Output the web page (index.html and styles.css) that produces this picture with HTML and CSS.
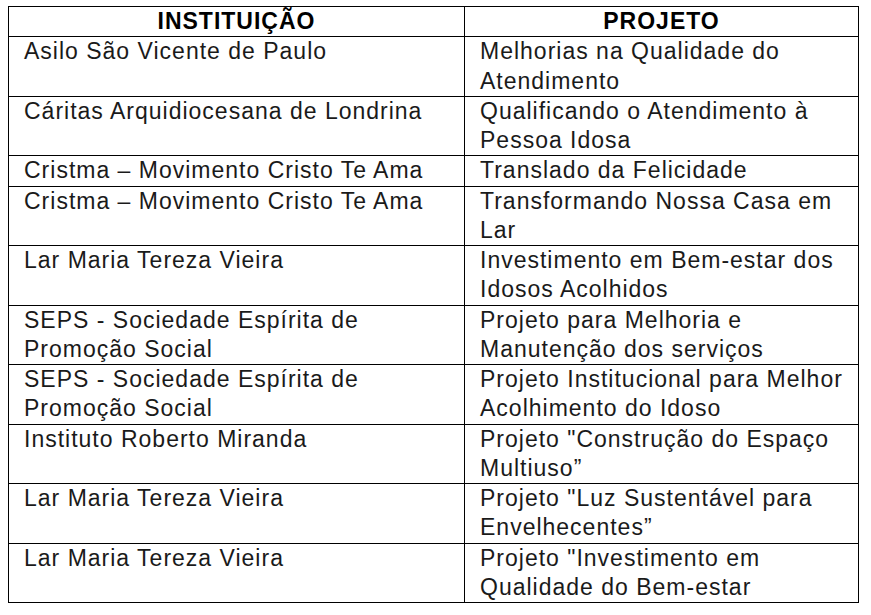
FILE: index.html
```html
<!DOCTYPE html>
<html lang="pt">
<head>
<meta charset="utf-8">
<title>Instituições e Projetos</title>
<link rel="stylesheet" href="styles.css">
</head>
<body>
<table class="grid">
  <colgroup><col class="c-inst"><col class="c-proj"></colgroup>
  <thead>
    <tr><th>INSTITUIÇÃO</th><th>PROJETO</th></tr>
  </thead>
  <tbody>
    <tr><td>Asilo São Vicente de Paulo</td><td>Melhorias na Qualidade do<br>Atendimento</td></tr>
    <tr><td>Cáritas Arquidiocesana de Londrina</td><td>Qualificando o Atendimento à<br>Pessoa Idosa</td></tr>
    <tr><td>Cristma – Movimento Cristo Te Ama</td><td>Translado da Felicidade</td></tr>
    <tr><td>Cristma – Movimento Cristo Te Ama</td><td>Transformando Nossa Casa em<br>Lar</td></tr>
    <tr><td>Lar Maria Tereza Vieira</td><td>Investimento em Bem-estar dos<br>Idosos Acolhidos</td></tr>
    <tr><td>SEPS - Sociedade Espírita de<br>Promoção Social</td><td>Projeto para Melhoria e<br>Manutenção dos serviços</td></tr>
    <tr><td>SEPS - Sociedade Espírita de<br>Promoção Social</td><td>Projeto Institucional para Melhor<br>Acolhimento do Idoso</td></tr>
    <tr><td>Instituto Roberto Miranda</td><td>Projeto "Construção do Espaço<br>Multiuso”</td></tr>
    <tr><td>Lar Maria Tereza Vieira</td><td>Projeto "Luz Sustentável para<br>Envelhecentes”</td></tr>
    <tr><td>Lar Maria Tereza Vieira</td><td>Projeto "Investimento em<br>Qualidade do Bem-estar</td></tr>
  </tbody>
</table>
</body>
</html>
```

FILE: styles.css
```css
html, body {
  margin: 0;
  padding: 0;
  background: #ffffff;
}

body {
  padding: 6px 0 0 8px;
  font-family: "Liberation Sans", Arial, sans-serif;
  font-size: 23px;
  letter-spacing: 1px;
  color: #1a1a1a;
}

.grid {
  border-collapse: collapse;
  width: 850px;
  table-layout: fixed;
}

.c-inst { width: 456px; }
.c-proj { width: 394px; }

.grid th,
.grid td {
  border: 1px solid #000;
  padding: 0 2px 0 15px;
  line-height: 29.25px;
  vertical-align: top;
  text-align: left;
  white-space: nowrap;
}

.grid th {
  font-weight: bold;
  text-align: center;
  padding: 0;
  color: #000;
}
```
